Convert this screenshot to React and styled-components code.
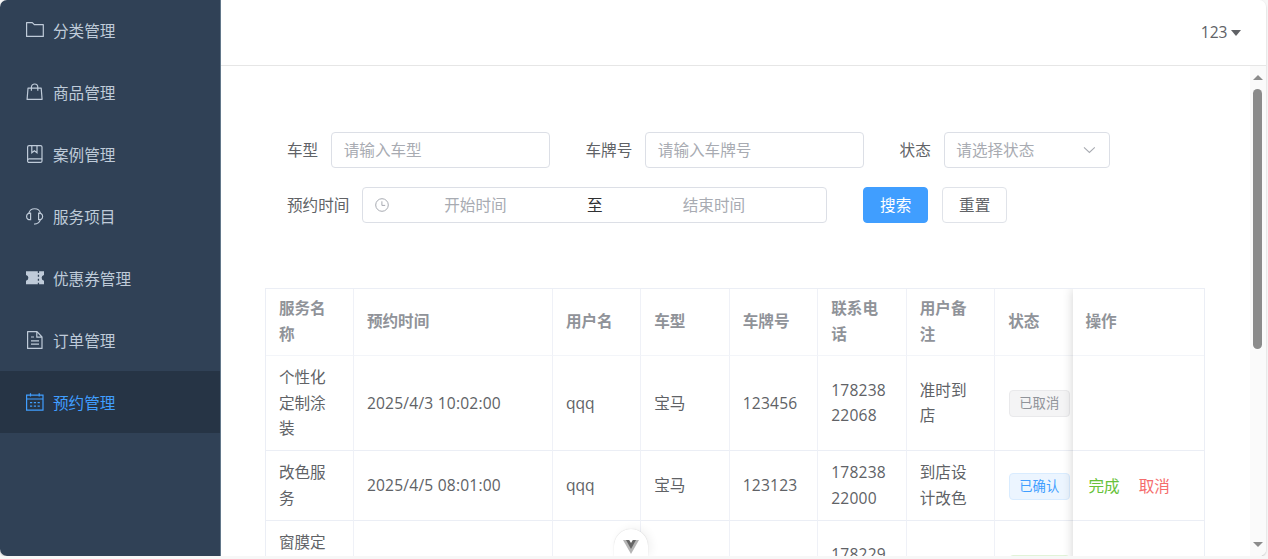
import React from "react";
import styled, { createGlobalStyle } from "styled-components";

const GlobalStyle = createGlobalStyle`
  * {
    box-sizing: border-box;
  }
  body {
    margin: 0;
    background-color: #f7f7f7;
    font-family: "Open Sans", "Noto Sans CJK SC", sans-serif;
    font-size: 15.6px;
    color: #606266;
    overflow: hidden;
  }
`;

const Window = styled.div`
  display: flex;
  width: 1265.5px;
  height: 556px;
  border-radius: 7px;
  overflow: hidden;
  background-color: white;
`;

const Shadow = styled.div`
  width: 1265.5px;
  height: 556px;
  border-radius: 7px;
  box-shadow: 0 1px 2px rgba(0, 0, 0, 0.22);
`;

const Sidebar = styled.div`
  flex: none;
  width: 220.5px;
  background-color: #304156;
  border-right: 1px solid #62778a;
`;

const MenuItem = styled.div`
  display: flex;
  align-items: center;
  gap: 9px;
  height: 62px;
  padding: 1px 0 0 26px;
  color: ${(props) => (props.$active ? "#409eff" : "#bfcbd9")};
  background-color: ${(props) => (props.$active ? "#263445" : "transparent")};

  &:first-child {
    margin-top: -1px;
  }

  svg {
    flex: none;
    margin-top: -1px;
  }
`;

const Main = styled.div`
  flex: 1;
  min-width: 0;
  display: flex;
  flex-direction: column;
`;

const Header = styled.div`
  flex: none;
  display: flex;
  align-items: center;
  justify-content: flex-end;
  gap: 3px;
  height: 66px;
  padding: 0 25px 2px 0;
  border-bottom: 1px solid #e6e6e6;
`;

const Caret = styled.div`
  border: 5px solid transparent;
  border-top: 6px solid #606266;
  border-bottom: 0;
  margin-top: 2px;
`;

const Body = styled.div`
  flex: 1;
  min-height: 0;
  display: flex;
  justify-content: space-between;
`;

const Content = styled.div`
  padding: 66px 0 0 44.5px;
  overflow: hidden;
`;

const ScrollBar = styled.div`
  width: 15.5px;
  display: flex;
  flex-direction: column;
  align-items: center;
  padding: 9px 0 9px;
  background-color: #fafafa;
`;

const ScrollArrow = styled.div`
  border: 5px solid transparent;
  border-${(props) => (props.$up ? "bottom" : "top")}: 5px solid #8b8b8b;
  border-${(props) => (props.$up ? "top" : "bottom")}: 0;
  margin-top: ${(props) => (props.$up ? "0" : "auto")};
`;

const Thumb = styled.div`
  width: 9px;
  height: 260px;
  margin-top: 9px;
  border-radius: 5px;
  background-color: #8b8b8b;
`;

const Form = styled.div`
  display: flex;
  flex-direction: column;
  gap: 19.5px;
  margin-left: 22px;
`;

const FormRow = styled.div`
  display: flex;
  align-items: center;
  height: 35.5px;
`;

const Label = styled.div`
  margin-right: 13px;
  white-space: nowrap;
`;

const Field = styled.div`
  display: flex;
  align-items: center;
  justify-content: space-between;
  width: ${(props) => props.$width}px;
  height: 35.5px;
  margin-right: 35.3px;
  padding: 0 13px 1px 11.5px;
  border: 1px solid #dcdfe6;
  border-radius: 4px;
  color: #a8abb2;
  white-space: nowrap;

  svg {
    position: relative;
    top: 1px;
  }
`;

const RangeField = styled(Field)`
  justify-content: flex-start;
  margin-right: 35.5px;
`;

const RangeText = styled.div`
  width: ${(props) => props.$width}px;
  text-align: center;
  color: ${(props) => (props.$dark ? "#303133" : "#a8abb2")};
`;

const Button = styled.div`
  display: flex;
  align-items: center;
  justify-content: center;
  width: 65.5px;
  height: 35.5px;
  margin-right: 13.5px;
  padding-bottom: 1px;
  border: 1px solid ${(props) => (props.$primary ? "#409eff" : "#e0e3e9")};
  border-radius: 4px;
  background-color: ${(props) => (props.$primary ? "#409eff" : "white")};
  color: ${(props) => (props.$primary ? "white" : "#606266")};
`;

const Table = styled.div`
  display: flex;
  width: 940px;
  margin-top: 65px;
  border: 1px solid #ebeef5;
  overflow: hidden;
`;

const Columns = styled.div`
  width: 806.5px;
  overflow: hidden;
`;

const FixedColumn = styled.div`
  flex: 1;
  background-color: white;
  box-shadow: 0 0 10px rgba(0, 0, 0, 0.18);
  z-index: 1;
`;

const Row = styled.div`
  display: grid;
  grid-template-columns: ${(props) =>
    props.$fixed ? "1fr" : "88px 199px 88.3px 88.5px 88.5px 88.5px 88.5px 88.5px"};
  height: ${(props) => props.$height}px;
`;

const Cell = styled.div`
  display: flex;
  align-items: center;
  padding: 1px 12.5px 0 12.9px;
  border-right: 1px solid #eff1f7;
  border-bottom: 1px solid #ebeef5;
  line-height: 25.5px;
  letter-spacing: ${(props) => (props.$number ? "0.2px" : "normal")};
  word-break: break-all;
`;

const HeadCell = styled(Cell)`
  padding-top: 0;
  font-weight: 700;
  color: #909399;
  border-bottom-color: #f3f5f9;

  &:only-child {
    border-right: 0;
  }
`;

const ActionCell = styled(Cell)`
  gap: 19px;
  padding-left: 16px;
  padding-top: 3px;
  border-right: 0;
  white-space: nowrap;
`;

const tagColors = {
  info: ["#f4f4f5", "#e9e9eb", "#909399"],
  primary: ["#ecf5ff", "#d9ecff", "#409eff"],
  success: ["#f0f9eb", "#e1f3d8", "#67c23a"],
};

const Tag = styled.div`
  flex: none;
  width: 61px;
  height: 27px;
  margin-top: 1px;
  margin-left: 0.6px;
  border: 1px solid ${(props) => tagColors[props.$type][1]};
  border-radius: 4px;
  background-color: ${(props) => tagColors[props.$type][0]};
  color: ${(props) => tagColors[props.$type][2]};
  font-size: 13.3px;
  line-height: 25px;
  text-align: center;
  white-space: nowrap;
`;

const Action = styled.div`
  color: ${(props) => (props.$danger ? "#f56c6c" : "#67c23a")};
`;

const FloatButton = styled.div`
  position: absolute;
  left: 614px;
  top: 529px;
  width: 34px;
  height: 27px;
  padding-top: 11px;
  border-radius: 17px 17px 0 0;
  background-color: white;
  box-shadow: 0 0 1px rgba(0, 0, 0, 0.2), 3px -1px 10px rgba(0, 0, 0, 0.06);
  clip-path: inset(-15px -20px 0 -20px);
  display: flex;
  justify-content: center;
`;

const Icon = ({ children }) => (
  <svg width="18" height="18" viewBox="0 0 18 18" fill="none" stroke="currentColor" strokeWidth="1.2">
    {children}
  </svg>
);

const FolderIcon = () => (
  <Icon>
    <path d="M.6 1.6h5.7l2 2.1h9v11.7H.6z" strokeLinejoin="round" />
  </Icon>
);

const GoodsIcon = () => (
  <Icon>
    <path d="M2 5.2h13.2l.9 11.2H1.1zM5.4 7.8V4.2a3.2 3.2 0 0 1 6.4 0v3.6" strokeLinejoin="round" />
  </Icon>
);

const CollectionIcon = () => (
  <Icon>
    <rect x="1.6" y=".6" width="14.4" height="16.8" rx="1.5" />
    <path d="M1.6 15.2q0-1.3 1.5-1.3h13M5.8.6v7.2l2.6-2 2.6 2V.6" />
  </Icon>
);

const ServiceIcon = () => (
  <Icon>
    <path d="M2.8 6.4a6 6 0 0 1 11.7 0M14.4 12.6q-1.2 4.2-6.3 4.5" />
    <path d="M4.6 6.2v6.5C2 12.9.6 11.7.6 9.5S2 6 4.6 6.2zM12.6 6.2v6.5c2.6.2 4-1 4-3.2S15.2 6 12.6 6.2z" />
  </Icon>
);

const TicketIcon = () => (
  <Icon>
    <path
      d="M0 2.3h11.8v1.6h1.3V2.3H18v3.7a2.9 2.9 0 0 0 0 5.7v3.6h-4.9v-1.6h-1.3v1.6H0v-3.6a2.9 2.9 0 0 0 0-5.7zM11.8 5.8v2h1.3v-2zM11.8 9.8v2h1.3v-2z"
      fill="currentColor"
      fillRule="evenodd"
      stroke="none"
    />
  </Icon>
);

const DocumentIcon = () => (
  <Icon>
    <path d="M1.6.6H11l5 5.4v11.4H1.6zM10.8.8v5.4H16M5 6h3M5 9.8h8M5 13.2h8" strokeLinejoin="round" />
  </Icon>
);

const DateIcon = () => (
  <Icon>
    <path d="M.6 2.2H17v15H.6zM.6 6H17M4.5.3v3.2M13.2.3v3.2" />
    <path d="M4 9.7h10M4 13.2h10" strokeWidth="1.3" strokeDasharray="2.2 1.6" />
  </Icon>
);

const ClockIcon = () => (
  <svg width="14" height="14" viewBox="0 0 14 14" fill="none" stroke="#a8abb2">
    <circle cx="7" cy="7" r="6.3" />
    <path d="M6.9 3.3v4.1h3.3" />
  </svg>
);

const ArrowIcon = () => (
  <svg width="13" height="8" viewBox="0 0 13 8" fill="none" stroke="#a8abb2" strokeWidth="1.1">
    <path d="M1 1.3l5.4 5.2 5.4-5.2" />
  </svg>
);

const VueIcon = () => (
  <svg width="16" height="14" viewBox="0 0 16 14">
    <path d="M0 0h16L8 14z" fill="#b5b5b5" />
    <path d="M3 0h10L8 9z" fill="#666" />
    <path d="M6.2 0h3.6L8 3z" fill="white" />
  </svg>
);

const menu = [
  { title: "分类管理", icon: FolderIcon },
  { title: "商品管理", icon: GoodsIcon },
  { title: "案例管理", icon: CollectionIcon },
  { title: "服务项目", icon: ServiceIcon },
  { title: "优惠券管理", icon: TicketIcon },
  { title: "订单管理", icon: DocumentIcon },
  { title: "预约管理", icon: DateIcon, active: true },
];

const columns = ["服务名称", "预约时间", "用户名", "车型", "车牌号", "联系电话", "用户备注", "状态"];

const bookings = [
  {
    cells: ["个性化定制涂装", "2025/4/3 10:02:00", "qqq", "宝马", "123456", "17823822068", "准时到店"],
    status: "已取消",
    type: "info",
    height: 94.5,
  },
  {
    cells: ["改色服务", "2025/4/5 08:01:00", "qqq", "宝马", "123123", "17823822000", "到店设计改色"],
    status: "已确认",
    type: "primary",
    height: 70,
    actions: true,
  },
  {
    cells: ["窗膜定", "", "", "", "", "178229", ""],
    status: "",
    type: "success",
    height: 44,
    clipped: true,
  },
];

const ClippedRow = styled(Row)`
  ${Cell} {
    align-items: flex-start;
    padding-top: 9px;
  }
  ${Cell}:nth-child(6) {
    padding-top: 21px;
  }
  ${Cell}:nth-child(8) {
    padding-top: 33px;
  }
`;

const App = () => {
  return (
    <>
      <GlobalStyle />
      <Shadow>
        <Window>
          <Sidebar>
            {menu.map(({ title, icon: MenuIcon, active }) => (
              <MenuItem key={title} $active={active}>
                <MenuIcon />
                {title}
              </MenuItem>
            ))}
          </Sidebar>
          <Main>
            <Header>
              123
              <Caret />
            </Header>
            <Body>
              <Content>
                <Form>
                  <FormRow>
                    <Label>车型</Label>
                    <Field $width={219}>请输入车型</Field>
                    <Label>车牌号</Label>
                    <Field $width={219}>请输入车牌号</Field>
                    <Label>状态</Label>
                    <Field $width={166}>
                      请选择状态
                      <ArrowIcon />
                    </Field>
                  </FormRow>
                  <FormRow>
                    <Label>预约时间</Label>
                    <RangeField $width={465}>
                      <ClockIcon />
                      <RangeText $width={173}>开始时间</RangeText>
                      <RangeText $width={66} $dark>
                        至
                      </RangeText>
                      <RangeText $width={172}>结束时间</RangeText>
                    </RangeField>
                    <Button $primary>搜索</Button>
                    <Button>重置</Button>
                  </FormRow>
                </Form>
                <Table>
                  <Columns>
                    <Row $height={67.5}>
                      {columns.map((name) => (
                        <HeadCell key={name}>{name}</HeadCell>
                      ))}
                    </Row>
                    {bookings.map((booking) => {
                      const BodyRow = booking.clipped ? ClippedRow : Row;
                      return (
                        <BodyRow key={booking.cells[0]} $height={booking.height}>
                          {booking.cells.map((value, i) => (
                            <Cell key={i} $number={/\d/.test(value)}>
                              {value}
                            </Cell>
                          ))}
                          <Cell>
                            <Tag $type={booking.type}>{booking.status}</Tag>
                          </Cell>
                        </BodyRow>
                      );
                    })}
                  </Columns>
                  <FixedColumn>
                    <Row $fixed $height={67.5}>
                      <HeadCell>操作</HeadCell>
                    </Row>
                    {bookings.map((booking) => (
                      <Row key={booking.cells[0]} $fixed $height={booking.height}>
                        <ActionCell>
                          {booking.actions && (
                            <>
                              <Action>完成</Action>
                              <Action $danger>取消</Action>
                            </>
                          )}
                        </ActionCell>
                      </Row>
                    ))}
                  </FixedColumn>
                </Table>
              </Content>
              <ScrollBar>
                <ScrollArrow $up />
                <Thumb />
                <ScrollArrow />
              </ScrollBar>
            </Body>
          </Main>
        </Window>
      </Shadow>
      <FloatButton>
        <VueIcon />
      </FloatButton>
    </>
  );
};

export default App;
